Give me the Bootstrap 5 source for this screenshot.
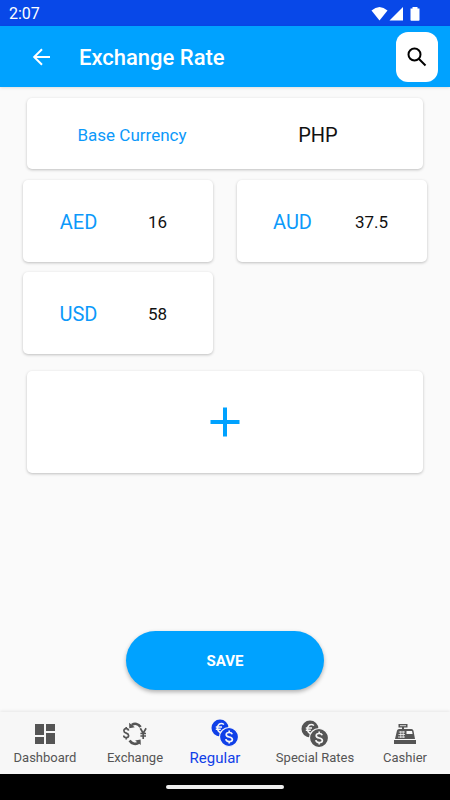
<!DOCTYPE html>
<html lang="en">
<head>
<meta charset="utf-8">
<meta name="viewport" content="width=device-width, initial-scale=1">
<title>Exchange Rate</title>
<link href="https://cdn.jsdelivr.net/npm/bootstrap@5.3.0/dist/css/bootstrap.min.css" rel="stylesheet">
<style>
  body { font-family: Roboto, "Liberation Sans", sans-serif; background: #fafafa; color: #111; }
  svg { display: block; }
  .status-bar { height: 26px; background: #0848e8; font-size: 16px; line-height: 28px; padding: 2px 30px 0 9px; }
  .app-bar { height: 61px; background: #00a2ff; padding: 0 12px 0 30px; box-shadow: 0 1px 3px rgba(0,0,0,.12); }
  .app-title { font-size: 22px; line-height: 26px; font-weight: 500; margin: 2px 0 0 26px; }
  .search-btn { width: 42px; height: 50px; border-radius: 12px; }
  .tile { background: #fff; border-radius: 5px; box-shadow: 0 1px 3px rgba(0,0,0,.24); }
  .base-tile { height: 71px; padding: 2px 12px 0; margin-top: 11px; }
  .rates { gap: 10px 24px; padding: 0 23px; margin: 11px 0 17px; display: grid; grid-template-columns: 1fr 1fr; }
  .rate-tile { height: 82px; padding: 2px 16px 0; }
  .side { margin-left: 27px; margin-right: 27px; }
  .name { color: #0c99fa; }
  .t17 { font-size: 17px; line-height: 24px; }
  .t20 { font-size: 20px; line-height: 24px; }
  .add-tile { height: 102px; }
  .save-btn, .save-btn:hover { width: 198px; height: 59px; background: #00a2ff; color: #fff; font-size: 15px; font-weight: 700; padding-top: 8px; margin-bottom: 22px; box-shadow: 0 2px 4px rgba(0,0,0,.3); }
  .tabs { height: 62px; background: #f7f7f7; box-shadow: 0 -1px 3px rgba(0,0,0,.08); padding-top: 6px; }
  .tab { color: #555; font-size: 13px; line-height: 20px; white-space: nowrap; }
  .tab-icon { height: 30px; }
  .tab.current { color: #1040e8; font-size: 15px; }
  .current .tab-label { padding-right: 20px; }
  .home-bar { height: 26px; background: #000; }
  .home-pill { width: 118px; height: 4px; background: #eee; }
</style>
</head>
<body>
<div class="d-flex flex-column min-vh-100">
  <div class="status-bar d-flex align-items-center justify-content-between text-white">
    <span>2:07</span>
    <svg width="50" height="16" viewBox="0 0 50 16" fill="#fff" aria-hidden="true"><path d="M1.500 4.500Q9.500-2.500 17.500 4.500L9.500 14.500Z"/><path d="M33 1V14.500H19.500Z"/><path d="M42.500 1h5v1.500h2V14q0 .8-.8.8h-7.400q-.8 0-.8-.8V2.500h2Z"/></svg>
  </div>
  <header class="app-bar d-flex align-items-center text-white">
    <button class="btn p-0 border-0 text-white" aria-label="Back"><svg width="23" height="24" viewBox="0 0 23 24" fill="none" stroke="#fff" stroke-width="2"><path d="M20 12H4.500M12 4.200 4.200 12l7.800 7.800"/></svg></button>
    <h1 class="app-title">Exchange Rate</h1>
    <button class="search-btn btn bg-white border-0 p-0 ms-auto d-flex align-items-center justify-content-center" aria-label="Search"><svg width="24" height="24" viewBox="0 0 24 24" fill="none" stroke="#000" stroke-width="2"><circle cx="9.500" cy="9.500" r="6"/><path d="m14 14 6.500 6.500"/></svg></button>
  </header>
  <main class="flex-grow-1 d-flex flex-column">
    <section class="tile base-tile side d-flex align-items-center text-center">
      <span class="name t17 w-50">Base Currency</span><span class="t20 w-50">PHP</span>
    </section>
    <section class="rates text-center">
      <div class="tile rate-tile d-flex align-items-center"><span class="name t20 w-50">AED</span><span class="t17 w-50">16</span></div>
      <div class="tile rate-tile d-flex align-items-center"><span class="name t20 w-50">AUD</span><span class="t17 w-50">37.5</span></div>
      <div class="tile rate-tile d-flex align-items-center"><span class="name t20 w-50">USD</span><span class="t17 w-50">58</span></div>
    </section>
    <button class="btn border-0 tile add-tile side d-flex align-items-center justify-content-center" aria-label="Add currency"><svg width="30" height="30" viewBox="0 0 30 30" fill="#00a2ff"><path d="M13 .5h4V13h12.500v4H17v12.500h-4V17H.5v-4H13Z"/></svg></button>
    <button class="save-btn btn border-0 rounded-pill mx-auto mt-auto">SAVE</button>
  </main>
  <nav class="tabs d-flex text-center">
    <a href="#" class="tab col text-decoration-none"><span class="tab-icon d-flex justify-content-center align-items-end pb-1"><svg width="20" height="20" viewBox="0 0 20 20" fill="currentColor"><path d="M0 0h9v11H0zM11 0h9v7h-9zM0 13h9v7H0zM11 9h9v11h-9z"/></svg></span><span class="tab-label d-block">Dashboard</span></a>
    <a href="#" class="tab col text-decoration-none"><span class="tab-icon d-flex justify-content-center align-items-end"><svg width="24" height="26" viewBox="0 0 24 26" fill="none" stroke="currentColor"><path stroke-width="1.700" d="M5.500 8.600C5.300 7 4.400 6.600 3.200 6.600 1.800 6.600.9 7.400.9 8.700c0 3.200 4.700 1.600 4.700 4.900 0 1.400-1 2.100-2.400 2.100S.7 14.900.7 13.400M3.200 5v1.500M3.200 15.800v1.700M17.300 6.200l2.900 5 2.900-5M20.200 11v6M17.400 11.500H23M17.400 14H23"/><path stroke-width="2.600" d="M17.600 5C15.300 1.600 11.600 1.100 8.700 3M6.600 18.500c2.200 3.700 6.600 4.300 9.400 2"/><path fill="currentColor" stroke="none" d="M6.100.8 6.300 6.300 11.800 5.200ZM17.800 23 17.600 17.400 12.100 18.600Z"/></svg></span><span class="tab-label d-block">Exchange</span></a>
    <a href="#" class="tab current col text-decoration-none" aria-current="page"><span class="tab-icon d-flex justify-content-center align-items-end"><svg width="28" height="29" viewBox="0 0 28 29"><g id="coins"><circle cx="9" cy="9" r="8.500" fill="currentColor"/><path d="M13 5.500C9.500 3 6.500 5.500 6.500 9s3 6 6.500 3.500M4.800 8h6.200M4.800 10.300h5" fill="none" stroke="#f7f7f7" stroke-width="1.500"/><circle cx="18" cy="18" r="9.500" fill="currentColor" stroke="#f7f7f7" stroke-width="1.200"/><path d="M21.200 15.300C20.800 13.900 19.700 13.500 18.200 13.500c-1.900 0-3 .8-3 2.200 0 3.300 6.200 1.300 6.200 4.700 0 1.500-1.300 2.200-3.200 2.200-1.900 0-3.100-.7-3.400-2.400M18.200 11.500v2M18.200 22.600v2" fill="none" stroke="#f7f7f7" stroke-width="1.700"/></g></svg></span><span class="tab-label d-block">Regular</span></a>
    <a href="#" class="tab col text-decoration-none"><span class="tab-icon d-flex justify-content-center align-items-end"><svg width="28" height="28" viewBox="0 0 28 28"><use href="#coins"/></svg></span><span class="tab-label d-block">Special Rates</span></a>
    <a href="#" class="tab col text-decoration-none"><span class="tab-icon d-flex justify-content-center align-items-end pb-1"><svg width="22" height="20" viewBox="0 0 22 20"><path fill="currentColor" d="M4.500 0h9v3.500H10V5h7.500q1.500 0 2 1.700L21 15H1L3 6.500Q3.500 5 5 5h3V3.500H4.500ZM0 16h22v4H0Z"/><path d="M6 1.700h6M4.800 8H11M4.500 10.500H11M4 13h7M6.800 7v7M9.200 7v7" fill="none" stroke="#f7f7f7" stroke-width=".8"/><path fill="#f7f7f7" d="M12.500 7H18l.6 3h-6.100z"/></svg></span><span class="tab-label d-block">Cashier</span></a>
  </nav>
  <div class="home-bar d-flex align-items-center justify-content-center"><div class="home-pill rounded-pill"></div></div>
</div>
<script src="https://cdn.jsdelivr.net/npm/bootstrap@5.3.0/dist/js/bootstrap.bundle.min.js"></script>
</body>
</html>
